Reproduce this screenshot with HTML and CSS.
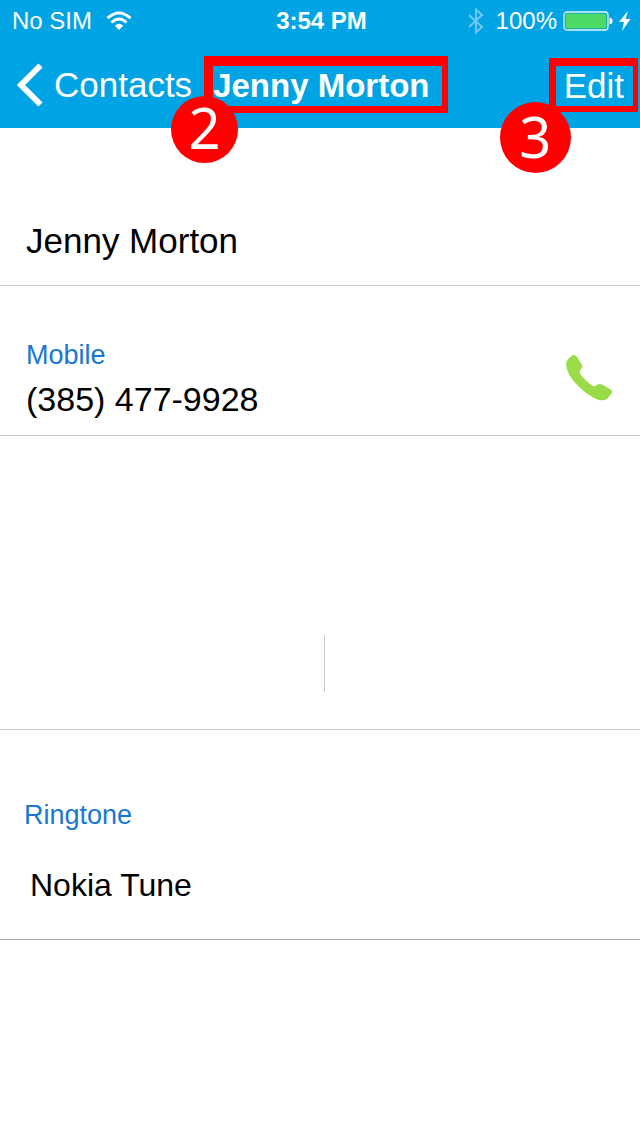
FILE: index.html
```html
<!DOCTYPE html>
<html lang="en">
<head>
<meta charset="utf-8">
<meta name="viewport" content="width=device-width, initial-scale=1">
<title>Jenny Morton</title>
<link rel="stylesheet" href="styles.css">
</head>
<body>
<header class="header">
  <div class="status">
    <div class="status-left">
      <span>No SIM</span>
      <svg class="wifi" width="26" height="20" viewBox="0 0 26 20" aria-hidden="true">
        <path d="M1.5 7.2Q13-3.2 24.500 7.200" fill="none" stroke="#fff" stroke-width="3"/>
        <path d="M5.500 11.500Q13 4.600 20.500 11.500" fill="none" stroke="#fff" stroke-width="3"/>
        <path d="M8.800 14.800Q13 10.700 17.200 14.800L13 19Z" fill="#fff"/>
      </svg>
    </div>
    <div class="status-time">3:54 PM</div>
    <div class="status-right">
      <svg class="bluetooth" width="16" height="28" viewBox="0 0 16 28" aria-hidden="true">
        <path d="M1 8L14 20L8 25.500V2.500L14 8L1 20" fill="none" stroke="#70c8f1" stroke-width="2"/>
      </svg>
      <span>100%</span>
      <svg class="battery" width="50" height="20" viewBox="0 0 50 20" aria-hidden="true">
        <rect x="1" y="1" width="44" height="18" rx="3" fill="none" stroke="#d9f5f5" stroke-width="1.300"/>
        <rect x="2.500" y="2.500" width="41" height="15" rx="1.500" fill="#4cd964" stroke="#20b0a8" stroke-width=".8"/>
        <path d="M46.500 6.500Q49.500 7 49.500 10T46.500 13.500Z" fill="#fff"/>
      </svg>
      <svg class="bolt" width="12" height="20" viewBox="0 0 12 20" aria-hidden="true">
        <path d="M9 0L0 11H5L3 20L11.500 8H6.500Z" fill="#fff"/>
      </svg>
    </div>
  </div>
  <nav class="nav">
    <button class="back" type="button">
      <svg width="26" height="44" viewBox="0 0 26 44" aria-hidden="true">
        <path d="M23.500 2.500L4 22L23.500 41.500" fill="none" stroke="#fff" stroke-width="6"/>
      </svg>
      <span>Contacts</span>
    </button>
    <div class="mark mark-title">
      <h1 class="title">Jenny Morton</h1>
      <span class="badge badge-two">2</span>
    </div>
    <div class="mark mark-edit">
      <button class="edit" type="button">Edit</button>
      <span class="badge badge-three">3</span>
    </div>
  </nav>
</header>
<main>
  <section class="row row-name">
    <p class="name">Jenny Morton</p>
  </section>
  <section class="row row-phone">
    <div>
      <h2 class="label">Mobile</h2>
      <p class="number">(385) 477-9928</p>
    </div>
    <button class="call" type="button" aria-label="Call mobile">
      <svg width="48" height="48" viewBox="0 0 48 48" aria-hidden="true">
        <path d="M1.500 7.500Q5 2 8.500 1Q10.500 .5 12 3L16.500 10Q18 12.500 16.500 14.500Q14 17.500 15 19.500Q20 27 28 32Q30 32.500 31 31.500Q34 29 37 30.500L45 35Q48.500 37 46.500 39.500Q43 44.500 40 46Q34 47 28 43.500Q13 34.500 5 22Q0 13 1.500 7.500Z" fill="#9adc48"/>
      </svg>
    </button>
  </section>
  <section class="row row-empty">
    <div class="divider"></div>
  </section>
  <section class="row row-ringtone">
    <h2 class="label">Ringtone</h2>
    <p class="tune">Nokia Tune</p>
  </section>
</main>
</body>
</html>
```
FILE: styles.css
```css
* {
  box-sizing: border-box;
}

body {
  margin: 0;
  background: #fff;
  color: #000;
  font-family: "Liberation Sans", Arial, sans-serif;
}

h1,
h2,
p {
  margin: 0;
  font-weight: 400;
}

button {
  margin: 0;
  padding: 0;
  border: 0;
  background: none;
  color: inherit;
  font: inherit;
}

svg {
  display: block;
}

.header {
  background: #00a3e3;
  color: #fff;
}

.status {
  display: grid;
  grid-template-columns: 1fr auto 1fr;
  align-items: center;
  height: 41px;
  padding: 0 9px 0 12px;
  font-size: 24px;
  line-height: 41px;
}

.status-left,
.status-right {
  display: flex;
  align-items: center;
}

.status-left {
  gap: 14px;
}

.status-right {
  justify-content: flex-end;
  gap: 6px;
}

.bluetooth {
  margin-right: 6px;
}

.status-time {
  font-weight: 700;
}

.nav {
  display: flex;
  align-items: center;
  height: 87px;
  padding: 0 2px 0 17px;
}

.back {
  display: flex;
  align-items: center;
  gap: 11px;
  font-size: 35px;
  line-height: 44px;
}

.mark {
  position: relative;
  border: solid #f00;
}

.mark-title {
  margin-left: 12px;
  padding-right: 13px;
  border-width: 10px 6px 7px 9px;
}

.mark-edit {
  margin-left: auto;
  padding: 0 9px 0 8px;
  border-width: 8px 5px 6px 7px;
}

.title {
  font-size: 33px;
  font-weight: 700;
  line-height: 40px;
}

.edit {
  display: block;
  font-size: 35px;
  line-height: 40px;
}

.badge {
  position: absolute;
  border-radius: 50%;
  background: #f00;
  font-family: "Noto Sans", sans-serif;
  font-size: 56px;
  text-align: center;
}

.badge-two {
  top: 30px;
  left: -42px;
  width: 67px;
  height: 67px;
  line-height: 62px;
}

.badge-three {
  top: 36px;
  left: -56px;
  width: 71px;
  height: 71px;
  line-height: 68px;
}

.row {
  border-bottom: 1px solid #c8c8c8;
}

.row-name {
  padding: 93px 26px 24px;
}

.name {
  font-size: 35px;
  line-height: 40px;
}

.row-phone {
  display: flex;
  align-items: flex-start;
  justify-content: space-between;
  padding: 53px 27px 16px 26px;
}

.call {
  padding-top: 15px;
}

.label {
  color: #1777d3;
  font-size: 27px;
  line-height: 32px;
}

.number {
  margin-top: 8px;
  font-size: 34px;
  line-height: 40px;
}

.row-empty {
  display: flex;
  justify-content: center;
  padding: 199px 0 37px 9px;
}

.divider {
  width: 1px;
  height: 57px;
  background: #c8c8c8;
}

.row-ringtone {
  padding: 69px 24px 34px;
  border-color: #aaa;
}

.tune {
  margin-top: 34px;
  padding-left: 6px;
  font-size: 32px;
  line-height: 40px;
}
```
